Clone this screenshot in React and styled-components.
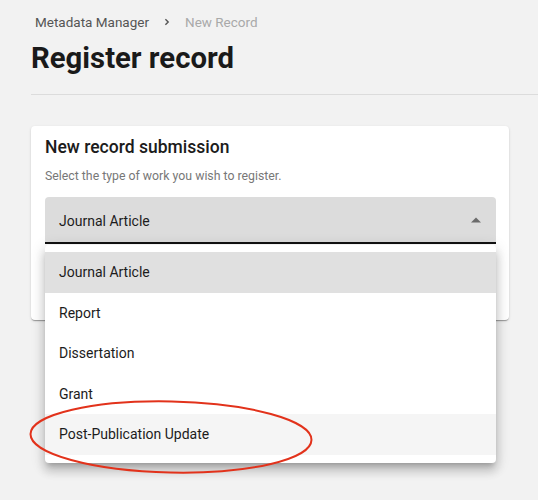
import * as React from 'react';
import styled, { createGlobalStyle } from 'styled-components';

const GlobalStyle = createGlobalStyle`
  html, body {
    margin: 0;
    padding: 0;
    background: #f2f2f2;
  }
  body {
    font-family: Roboto, "Liberation Sans", sans-serif;
    color: #1c1c1c;
  }
`;

const options = ['Journal Article', 'Report', 'Dissertation', 'Grant', 'Post-Publication Update'];

export default function App() {
  const [value] = React.useState('Journal Article');
  const hovered = 'Post-Publication Update';

  return (
    <>
      <GlobalStyle />
      <Page>
        <Breadcrumbs>
          <Crumb>Metadata Manager</Crumb>
          <Sep>
            <svg width="8" height="8" viewBox="0 0 8 8">
              <path d="M2.4 1.2 L5.2 4 L2.4 6.8" fill="none" stroke="#555" strokeWidth="1.4" />
            </svg>
          </Sep>
          <Crumb $current>New Record</Crumb>
        </Breadcrumbs>
        <Title>Register record</Title>
        <Divider />

        <Card>
          <CardTitle>New record submission</CardTitle>
          <Hint>Select the type of work you wish to register.</Hint>
          <SelectWrap>
            <SelectField>
              <span>{value}</span>
              <Arrow>
                <svg width="10" height="6" viewBox="0 0 10 6">
                  <path d="M0 5.5 L5 0.5 L10 5.5 Z" fill="#6b6b6b" />
                </svg>
              </Arrow>
            </SelectField>
            <Menu>
              {options.map((o) => (
                <Item key={o} $selected={o === value} $hover={o === hovered}>
                  {o}
                </Item>
              ))}
            </Menu>
          </SelectWrap>
        </Card>

        <Annotation width="288" height="78" viewBox="0 0 288 78">
          <ellipse cx="143" cy="38" rx="140.5" ry="35.5" fill="none" stroke="#e2321b" strokeWidth="2" transform="rotate(1.2 143 38)" />
        </Annotation>
      </Page>
    </>
  );
}

const Page = styled.div`
  position: relative;
  padding: 12px 0 0 31px;
  min-height: 500px;
  box-sizing: border-box;
`;

const Breadcrumbs = styled.div`
  display: flex;
  align-items: center;
  padding-left: 4px;
  height: 20px;
  font-size: 13.5px;
`;

const Crumb = styled.span`
  color: ${(p) => (p.$current ? '#a9a9a9' : '#555')};
`;

const Sep = styled.span`
  display: flex;
  align-items: center;
  margin: 0 14px 0 14px;
`;

const Title = styled.h1`
  margin: 8px 0 0;
  font-size: 29.3px;
  line-height: 36px;
  font-weight: 700;
  color: #1a1a1a;
`;

const Divider = styled.hr`
  margin: 18px 0 0;
  border: none;
  border-top: 1px solid #dcdcdc;
  height: 0;
`;

const Card = styled.section`
  margin-top: 31px;
  width: 478px;
  height: 194px;
  box-sizing: border-box;
  padding: 10px 13px 0 14px;
  background: #fff;
  border-radius: 4px;
  box-shadow: 0 2px 1px -1px rgba(0, 0, 0, 0.2), 0 1px 1px 0 rgba(0, 0, 0, 0.14), 0 1px 3px 0 rgba(0, 0, 0, 0.12);
`;

const CardTitle = styled.h2`
  margin: 0;
  font-family: "Roboto Medium", Roboto, "Liberation Sans", sans-serif;
  font-size: 17.5px;
  line-height: 22px;
  font-weight: 500;
  color: #1c1c1c;
`;

const Hint = styled.p`
  margin: 9px 0 0;
  font-size: 12.3px;
  line-height: 18px;
  color: #777;
`;

const SelectWrap = styled.div`
  position: relative;
  margin-top: 12px;
`;

const SelectField = styled.div`
  display: flex;
  align-items: center;
  justify-content: space-between;
  height: 47px;
  padding: 2px 15px 0 14px;
  box-sizing: border-box;
  background: #dcdcdc;
  border-radius: 4px 4px 0 0;
  border-bottom: 2px solid #111;
  font-size: 14px;
  color: #1c1c1c;
`;

const Arrow = styled.span`
  display: flex;
  margin-top: -2px;
`;

const Menu = styled.ul`
  position: absolute;
  top: 100%;
  left: 0;
  right: 0;
  margin: 1px 0 0;
  padding: 7px 0 8px;
  list-style: none;
  background: #fff;
  border-radius: 4px;
  z-index: 2;
  box-shadow: 0 5px 5px -3px rgba(0, 0, 0, 0.2), 0 8px 10px 1px rgba(0, 0, 0, 0.14), 0 3px 14px 2px rgba(0, 0, 0, 0.12);
`;

const Item = styled.li`
  display: flex;
  align-items: center;
  height: 40.5px;
  padding: 0 14px;
  font-size: 14px;
  color: #1c1c1c;
  background: ${(p) => (p.$selected ? '#e0e0e0' : p.$hover ? '#f5f5f5' : 'transparent')};
`;

const Annotation = styled.svg`
  position: absolute;
  left: 28px;
  top: 399px;
  z-index: 3;
  pointer-events: none;
`;
